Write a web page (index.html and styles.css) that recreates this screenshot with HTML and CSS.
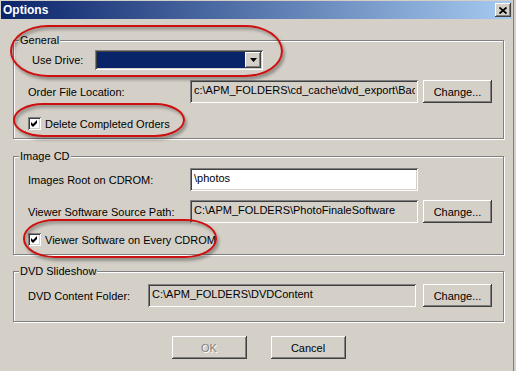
FILE: index.html
```html
<!DOCTYPE html>
<html lang="en">
<head>
  <meta charset="UTF-8" />
  <meta name="viewport" content="width=device-width, initial-scale=1.0" />
  <title>Options</title>
  <link rel="stylesheet" href="styles.css">
</head>
<body>
  <div class="window">
    <div class="titlebar">
      <span class="title">Options</span>
      <span class="close">
        <svg width="8" height="7" viewBox="0 0 8 7"><path d="M0.5 0.5 L7.5 6.5 M7.5 0.5 L0.5 6.5" stroke="#000" stroke-width="1.8"/></svg>
      </span>
    </div>

    <div class="panel">
      <fieldset class="group general">
        <legend>General</legend>
        <div class="row drive-row">
          <label class="drive-label">Use Drive:</label>
          <div class="combo">
            <span class="combo-value"></span>
            <span class="combo-btn"><svg width="7" height="4" viewBox="0 0 7 4"><path d="M0 0 H7 L3.5 4 Z" fill="#000"/></svg></span>
          </div>
        </div>
        <div class="row row-gap">
          <label class="label">Order File Location:</label>
          <input class="field readonly" type="text" value="c:\APM_FOLDERS\cd_cache\dvd_export\Backup" readonly>
          <button class="btn change">Change...</button>
        </div>
        <div class="row row-gap">
          <span class="check"><svg width="9" height="9" viewBox="0 0 9 9"><polygon points="1,3 3,5 7,1 7,4 3,8 1,6" fill="#000"/></svg></span>
          <span>Delete Completed Orders</span>
        </div>
      </fieldset>

      <fieldset class="group image-cd">
        <legend>Image CD</legend>
        <div class="row first">
          <label class="label">Images Root on CDROM:</label>
          <input class="field" type="text" value="\photos">
          <span class="btn-space"></span>
        </div>
        <div class="row row-gap">
          <label class="label">Viewer Software Source Path:</label>
          <input class="field readonly" type="text" value="C:\APM_FOLDERS\PhotoFinaleSoftware" readonly>
          <button class="btn change">Change...</button>
        </div>
        <div class="row check-row">
          <span class="check"><svg width="9" height="9" viewBox="0 0 9 9"><polygon points="1,3 3,5 7,1 7,4 3,8 1,6" fill="#000"/></svg></span>
          <span>Viewer Software on Every CDROM</span>
        </div>
      </fieldset>

      <fieldset class="group dvd">
        <legend>DVD Slideshow</legend>
        <div class="row first">
          <label class="label">DVD Content Folder:</label>
          <input class="field readonly wide" type="text" value="C:\APM_FOLDERS\DVDContent" readonly>
          <button class="btn change">Change...</button>
        </div>
      </fieldset>

      <div class="actions">
        <button class="btn action" disabled>OK</button>
        <button class="btn action">Cancel</button>
      </div>
    </div>

    <!-- red annotation rings drawn over the dialog -->
    <div class="mark mark-drive"></div>
    <div class="mark mark-delete"></div>
    <div class="mark mark-viewer"></div>
  </div>
</body>
</html>
```

FILE: styles.css
```css
:root {
  --face: #d4d0c8;
  --shadow: #808080;
  --dark: #404040;
  --mark: #cc1010;
}

body {
  margin: 0;
  background: var(--face);
  font-family: "Liberation Sans", Arial, sans-serif;
  font-size: 11px;
  color: #000;
}

.window {
  position: relative;
  width: 514px;
  height: 371px;
  box-sizing: border-box;
  padding: 1px 0 0 1px;
  border-right: 1px solid var(--shadow);
  background: var(--face);
  overflow: hidden;
}

.titlebar {
  width: 511px;
  height: 18px;
  box-sizing: border-box;
  padding: 0 1px 0 2px;
  display: flex;
  align-items: center;
  justify-content: space-between;
  background: linear-gradient(to right, #0a246a, #a6caf0);
}

.title {
  color: #fff;
  font-weight: bold;
  font-size: 12px;
}

.close {
  width: 16px;
  height: 14px;
  display: flex;
  align-items: center;
  justify-content: center;
  background: var(--face);
  box-shadow: inset -1px -1px var(--dark), inset 1px 1px #fff, inset -2px -2px var(--shadow);
}

.panel {
  padding: 15px 0 0 12px;
}

.group {
  width: 491px;
  box-sizing: border-box;
  margin: 0;
  padding: 0 11px 3px 5px;
  border: 1px solid var(--shadow);
  box-shadow: 1px 1px 0 #fff, inset 1px 1px 0 #fff;
}

.group legend {
  padding: 0 1px;
  line-height: 13px;
  background: var(--face);
}

.image-cd { margin-top: 11px; }
.dvd { margin-top: 10px; padding-bottom: 14px; }

.row {
  height: 23px;
  margin-left: 9px;
  display: flex;
  align-items: center;
}

.general .drive-row { margin-top: 1px; }
.row-gap { margin-top: 9px; }
.image-cd .first { margin-top: 5px; }
.image-cd .check-row { margin-top: 5px; }
.dvd .first { margin-top: 6px; }

.label { flex: 1; }

.drive-label {
  width: 63px;
  padding-left: 4px;
}

.combo {
  width: 168px;
  height: 20px;
  box-sizing: border-box;
  padding: 2px;
  display: flex;
  box-shadow: inset 1px 1px var(--shadow), inset -1px -1px #fff, inset 2px 2px var(--dark), inset -2px -2px var(--face);
}

.combo-value {
  flex: 1;
  background: #0a246a;
}

.combo-btn {
  width: 16px;
  display: flex;
  align-items: center;
  justify-content: center;
  background: var(--face);
  box-shadow: inset -1px -1px var(--dark), inset 1px 1px #fff, inset -2px -2px var(--shadow);
}

.field {
  width: 228px;
  height: 23px;
  box-sizing: border-box;
  margin: 0;
  padding: 0 3px 4px 4px;
  border: none;
  outline: none;
  font: inherit;
  color: #000;
  background: #fff;
  box-shadow: inset 1px 1px var(--shadow), inset -1px -1px #fff, inset 2px 2px var(--dark), inset -2px -2px var(--face);
}

.field.readonly { background: var(--face); }
.field.wide { width: 268px; }

.btn {
  margin: 0;
  padding: 0;
  border: none;
  font: inherit;
  color: #000;
  background: var(--face);
  box-shadow: inset -1px -1px var(--dark), inset 1px 1px #fff, inset -2px -2px var(--shadow);
}

.change {
  width: 69px;
  height: 23px;
  margin-left: 5px;
}

.dvd .change { margin-left: 7px; }

.btn-space {
  width: 69px;
  margin-left: 5px;
}

.check {
  width: 13px;
  height: 13px;
  box-sizing: border-box;
  padding: 2px;
  margin-right: 4px;
  display: flex;
  background: #fff;
  box-shadow: inset 1px 1px var(--shadow), inset -1px -1px #fff, inset 2px 2px var(--dark), inset -2px -2px var(--face);
}

.actions {
  margin-top: 14px;
  display: flex;
  justify-content: center;
  gap: 24px;
  width: 491px;
}

.action {
  width: 75px;
  height: 23px;
}

.action:disabled {
  color: var(--shadow);
  text-shadow: 1px 1px #fff;
}

.mark {
  position: absolute;
  box-sizing: border-box;
  border: 2px solid var(--mark);
  box-shadow: 2px 3px 3px rgba(0, 0, 0, 0.3), inset 2px 3px 3px rgba(0, 0, 0, 0.25);
}

.mark-drive {
  left: 10px;
  top: 25px;
  width: 273px;
  height: 52px;
  border-radius: 38px / 26px;
}

.mark-delete {
  left: 13px;
  top: 103px;
  width: 172px;
  height: 34px;
  border-radius: 30px / 17px;
}

.mark-viewer {
  left: 23px;
  top: 219px;
  width: 194px;
  height: 39px;
  border-radius: 32px / 19px;
}
```
